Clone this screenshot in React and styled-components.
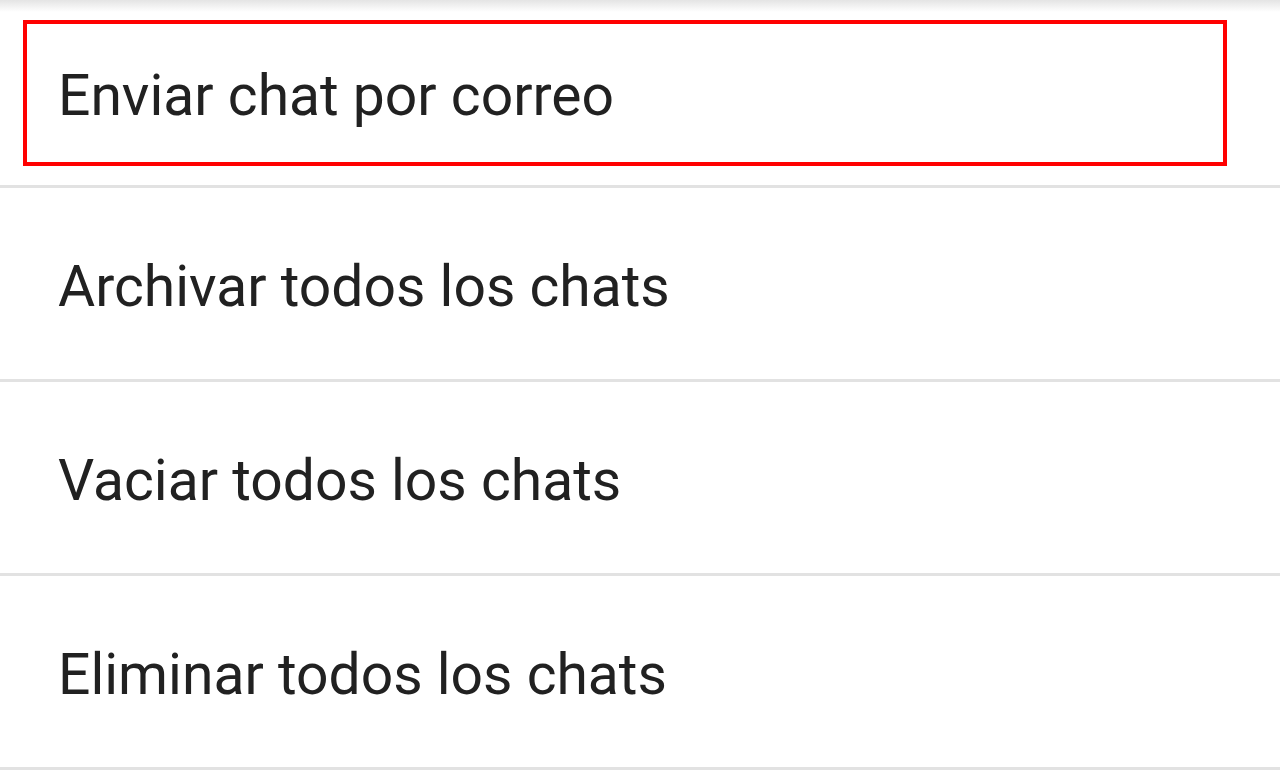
import React from 'react';
import styled, { createGlobalStyle } from 'styled-components';

const items = [
    'Enviar chat por correo',
    'Archivar todos los chats',
    'Vaciar todos los chats',
    'Eliminar todos los chats',
];

const App = () => {
    return (
        <>
            <GlobalStyle />
            <Screen>
                <Shadow />
                <List>
                    {items.map((label, i) => (
                        <Row key={label} $first={i === 0}>
                            {i === 0 ? (
                                <Highlight>
                                    <Label>{label}</Label>
                                </Highlight>
                            ) : (
                                <Label>{label}</Label>
                            )}
                        </Row>
                    ))}
                </List>
            </Screen>
        </>
    );
};

const GlobalStyle = createGlobalStyle`
    html, body {
        margin: 0;
        padding: 0;
        background: #ffffff;
    }
    body {
        font-family: Roboto, "Noto Sans", sans-serif;
    }
`;

const Screen = styled.div`
    position: relative;
    width: 1280px;
    height: 783px;
    overflow: hidden;
    background: #ffffff;
`;

const Shadow = styled.div`
    position: absolute;
    top: 0;
    left: 0;
    right: 0;
    height: 12px;
    background: linear-gradient(to bottom, #e4e4e4, rgba(255, 255, 255, 0));
    pointer-events: none;
`;

const List = styled.ul`
    list-style: none;
    margin: 0;
    padding: 0;
`;

const Row = styled.li`
    box-sizing: border-box;
    display: flex;
    align-items: ${({ $first }) => ($first ? 'stretch' : 'center')};
    height: ${({ $first }) => ($first ? '188px' : '194px')};
    padding: ${({ $first }) => ($first ? '20px 53px 19px 23px' : '0 58px')};
    border-bottom: 3px solid #e2e2e2;
`;

const Highlight = styled.div`
    box-sizing: border-box;
    flex: 1;
    display: flex;
    align-items: center;
    padding-left: 31px;
    border: 4px solid #ff0000;
`;

const Label = styled.span`
    font-size: 57px;
    color: #212121;
    line-height: 1;
    padding-top: 5px;
`;

export default App;
